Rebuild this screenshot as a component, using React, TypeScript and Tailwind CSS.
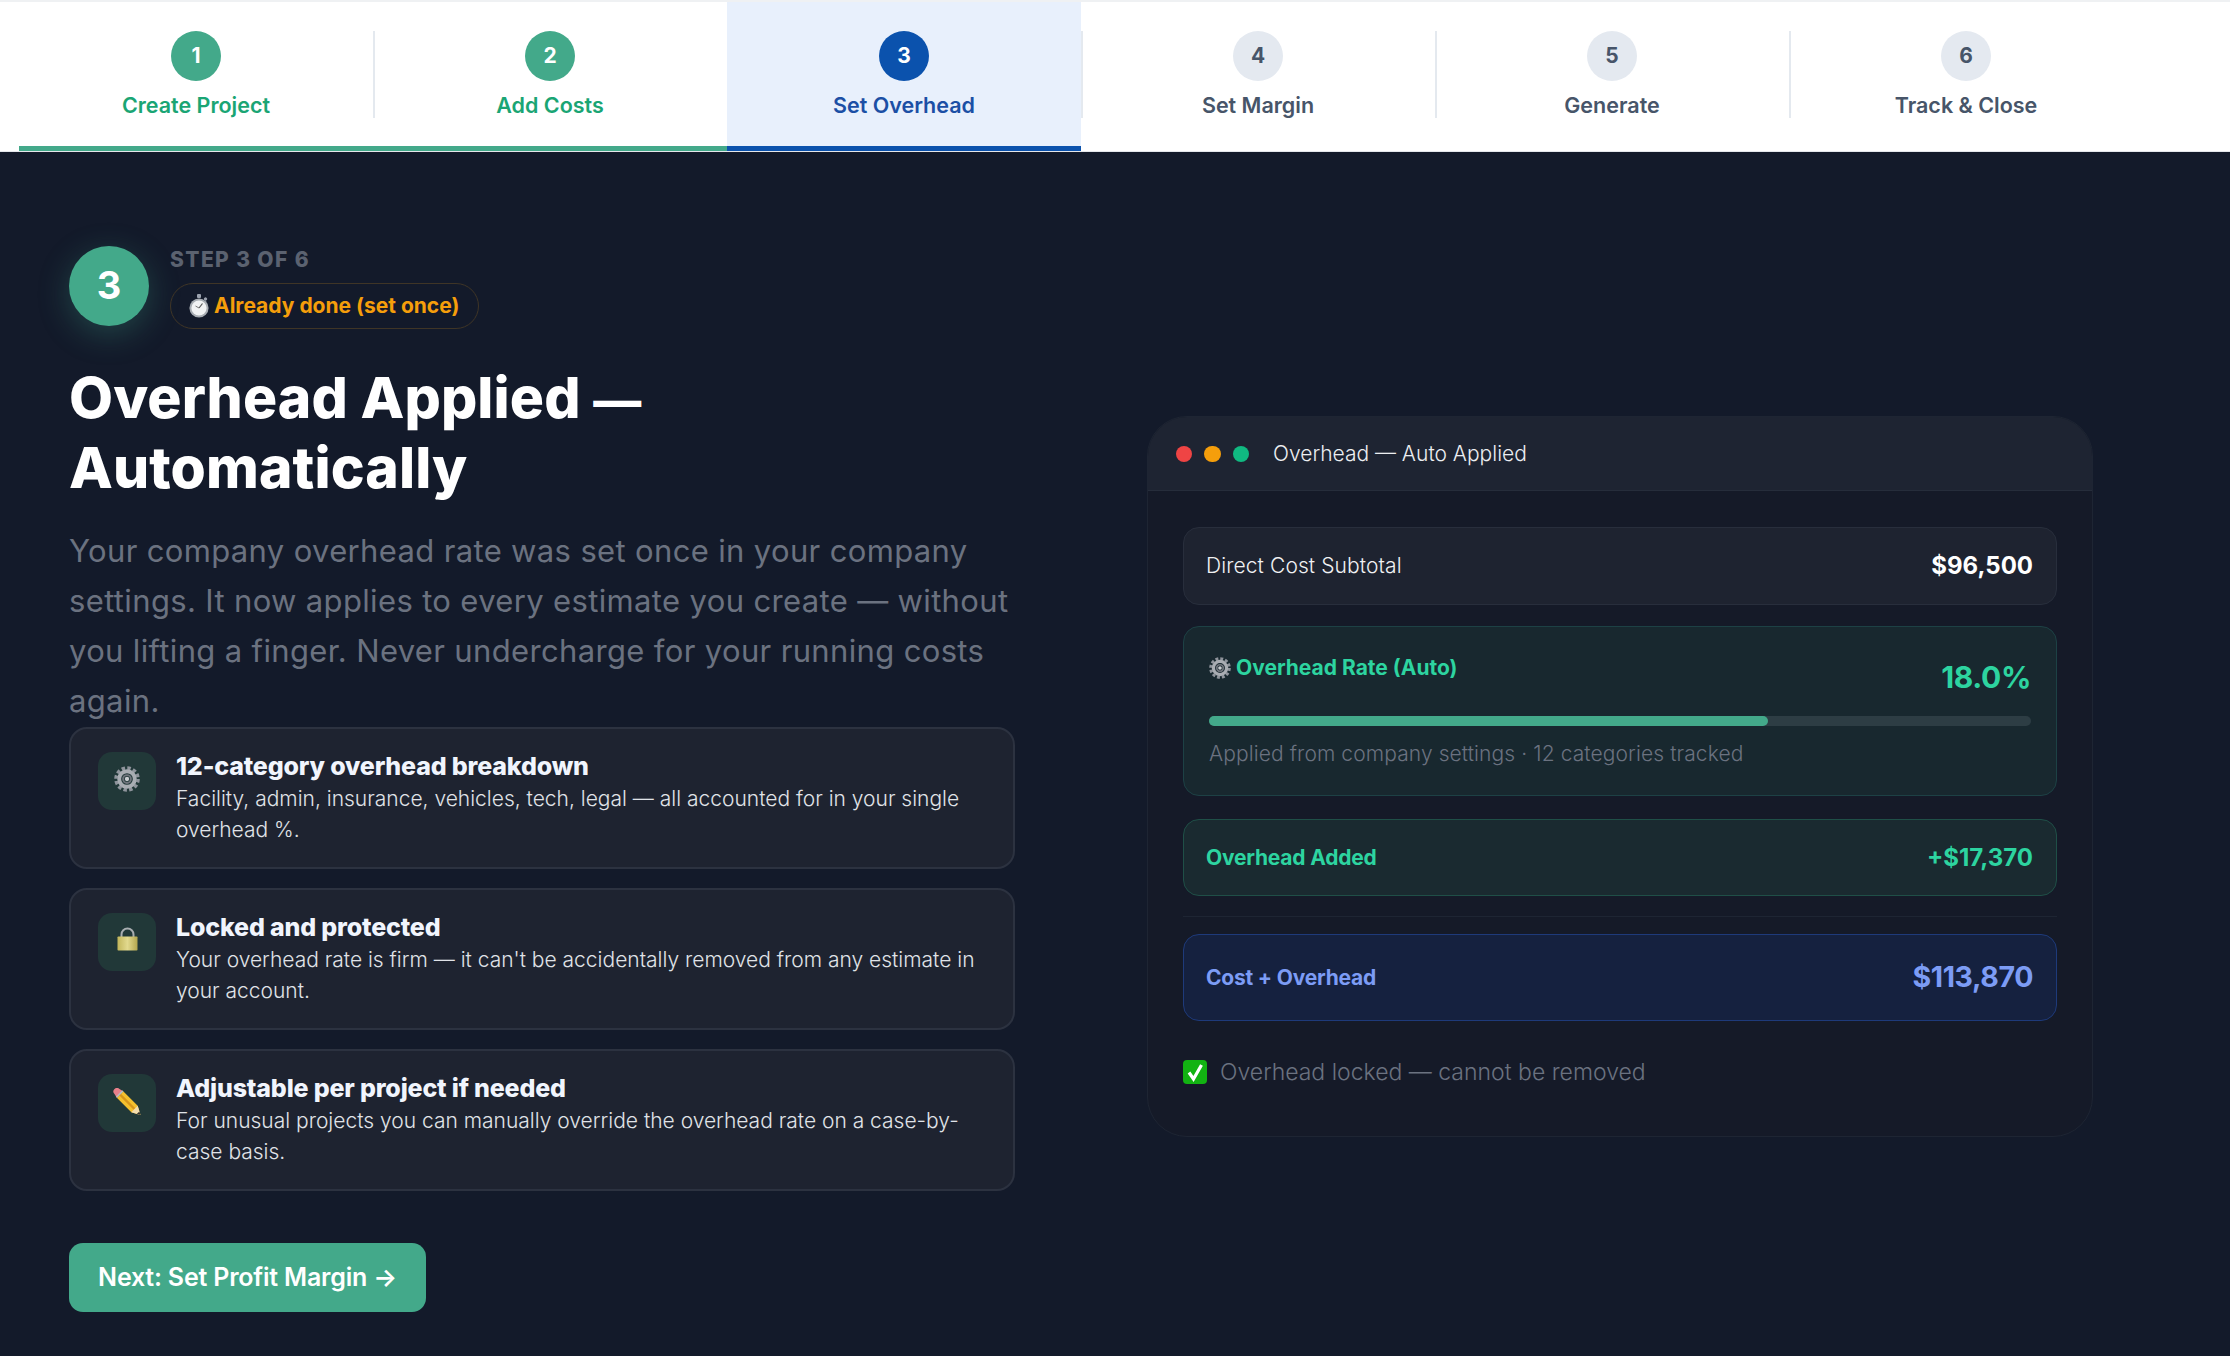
import { ReactNode } from 'react';

const tabs = [
  { n: 1, label: 'Create Project', state: 'done' },
  { n: 2, label: 'Add Costs', state: 'done' },
  { n: 3, label: 'Set Overhead', state: 'active' },
  { n: 4, label: 'Set Margin', state: 'todo' },
  { n: 5, label: 'Generate', state: 'todo' },
  { n: 6, label: 'Track & Close', state: 'todo' },
];

function GearIcon({ size }: { size: number }) {
  return (
    <svg width={size} height={size} viewBox="0 0 24 24" className="shrink-0">
      <circle cx="12" cy="12" r="10.2" fill="none" stroke="#8f949c" strokeWidth="3.2" strokeDasharray="3.2 2.14" />
      <circle cx="12" cy="12" r="7.2" fill="none" stroke="#a9adb3" strokeWidth="3.6" />
      <circle cx="12" cy="12" r="3.6" fill="none" stroke="#6f747c" strokeWidth="1.8" />
      <circle cx="12" cy="12" r="2" fill="#c9ccd0" />
    </svg>
  );
}

function LockIcon() {
  return (
    <svg width="21" height="24" viewBox="0 0 21 24">
      <defs>
        <linearGradient id="lockBody" x1="0" x2="1" y1="0" y2="0">
          <stop offset="0" stopColor="#c2b65a" />
          <stop offset="0.5" stopColor="#e2d98e" />
          <stop offset="1" stopColor="#b3a64e" />
        </linearGradient>
      </defs>
      <path d="M4.5 11V7.5a6 6 0 0 1 12 0V11" fill="none" stroke="#a8adb0" strokeWidth="2" />
      <rect x="0.5" y="9.5" width="20" height="14" rx="0.8" fill="url(#lockBody)" />
    </svg>
  );
}

function PencilIcon() {
  return (
    <svg width="28" height="28" viewBox="0 0 28 28">
      <path d="M10.2 3.3 L24.7 17.8 L27.5 27 L18.3 24.2 L3.8 9.7 Z" fill="#f4c02e" />
      <path d="M7 6.5 L21.5 21" stroke="#d8961c" strokeWidth="2.4" />
      <path d="M24.7 17.8 L27.5 27 L18.3 24.2 Z" fill="#f3dcae" />
      <path d="M26.4 23.4 L27.5 27 L23.8 25.9 Z" fill="#33302a" />
      <path d="M6.5 1 L10.2 3.3 L3.8 9.7 L1.5 6 a3.5 3.5 0 0 1 5 -5 Z" fill="#e8808a" />
      <path d="M3.4 9.3 L9.8 2.9" stroke="#b9bcc0" strokeWidth="1.6" />
    </svg>
  );
}

function StopwatchIcon() {
  return (
    <svg width="20" height="26" viewBox="0 0 20 26" className="shrink-0">
      <rect x="8" y="1" width="4" height="4" rx="1" fill="#9ca3af" />
      <rect x="15" y="4.5" width="3" height="3" rx="1" fill="#9ca3af" transform="rotate(45 16.5 6)" />
      <circle cx="10" cy="15" r="9.6" fill="#a8adb3" />
      <circle cx="10" cy="15" r="7.6" fill="#f1f2f3" />
      <path d="M10 15 L13.5 10.5" stroke="#555" strokeWidth="1.2" />
      <path d="M10 15 L6.5 13" stroke="#777" strokeWidth="1" />
    </svg>
  );
}

function CheckIcon() {
  return (
    <svg width="24" height="24" viewBox="0 0 24 24" className="shrink-0">
      <rect width="24" height="24" rx="4" fill="#12b312" />
      <path d="M6 12.5 L10.5 19 L18.5 5" fill="none" stroke="#fff" strokeWidth="3.2" />
    </svg>
  );
}

function Feature({ icon, title, children }: { icon: ReactNode; title: string; children: ReactNode }) {
  return (
    <div className="flex gap-[20px] rounded-[18px] border-2 border-[#2c3240] bg-[#1e2330] pt-[21px] pb-[22px] pl-[27px] pr-[20px]">
      <div className="mt-[2px] flex h-[58px] w-[58px] shrink-0 justify-center rounded-[14px] bg-[#213838] pt-[14px]">
        {icon}
      </div>
      <div>
        <div className="text-[25px] leading-[32px] font-extrabold tracking-[-0.17px] text-[#f1f5fd]">{title}</div>
        <p className="mt-[2px] text-[21px] leading-[30.5px] font-light text-[#e0e3e8]">{children}</p>
      </div>
    </div>
  );
}

export default function App() {
  return (
    <div className="min-h-[1356px] bg-[#131a2a] [font-family:Inter,sans-serif]">
      <nav className="flex h-[152px] border-t-2 border-b border-t-[#eff1f3] border-b-[#e5e7eb] bg-white pl-[19px]">
        {tabs.map((t) => (
          <div
            key={t.n}
            className={`h-[149px] w-[354px] border-b-[5px] pt-[29px] ${
              t.state === 'done'
                ? 'border-[#43a98a]'
                : t.state === 'active'
                  ? 'border-[#0b52ad] bg-[#e8f0fc]'
                  : 'border-transparent'
            }`}
          >
            <div
              className={`flex h-[87px] w-[356px] flex-col items-center border-r-2 ${
                t.n < 6 ? 'border-[#e4e9ef]' : 'border-transparent'
              }`}
            >
              <div
                className={`flex h-[50px] w-[50px] items-center justify-center rounded-full text-[21px] font-bold ${
                  t.state === 'done'
                    ? 'bg-[#43a98a] text-white'
                    : t.state === 'active'
                      ? 'bg-[#0b52ad] text-white'
                      : 'bg-[#e4e9f0] text-[#475569]'
                }`}
              >
                {t.n}
              </div>
              <div
                className={`mt-[11px] text-[21.5px] leading-[26px] font-semibold ${
                  t.state === 'done' ? 'text-[#1aa574]' : t.state === 'active' ? 'text-[#1b4fa5]' : 'text-[#475569]'
                }`}
              >
                {t.label}
              </div>
            </div>
          </div>
        ))}
      </nav>

      <main className="grid w-[2024px] grid-cols-[946px_946px] items-center gap-[132px] pt-[94px] pl-[69px]">
        <section>
          <div className="flex items-start gap-[21px]">
            <div className="flex h-[80px] w-[80px] items-center justify-center rounded-full bg-[#43a98a] pb-[2px] text-[38px] font-bold text-white shadow-[0_8px_32px_rgba(67,169,138,0.3)]">
              3
            </div>
            <div>
              <div className="text-[21px] leading-[27px] font-extrabold tracking-[1.4px] text-[#5b6270]">STEP 3 OF 6</div>
              <div className="mt-[10px] flex h-[46px] w-[309px] items-center gap-[5px] rounded-full border border-[#3f3526] pl-[18px] text-[21px] font-bold text-[#f59e0b]">
                <StopwatchIcon />
                Already done (set once)
              </div>
            </div>
          </div>

          <h1 className="mt-[34px] text-[57px] leading-[70px] font-extrabold tracking-[0.1px] text-white">
            Overhead Applied <span className="text-[48px] leading-none">—</span>
            <br />
            Automatically
          </h1>

          <p className="mt-[23px] w-[946px] text-[31px] leading-[50px] font-normal tracking-[0.35px] text-[#6b7280]">
            Your company overhead rate was set once in your company settings. It now applies to every estimate you
            create — without you lifting a finger. Never undercharge for your running costs again.
          </p>

          <div className="mt-px flex flex-col gap-[19px]">
            <Feature icon={<GearIcon size={26} />} title="12-category overhead breakdown">
              Facility, admin, insurance, vehicles, tech, legal — all accounted for in your single overhead %.
            </Feature>
            <Feature icon={<LockIcon />} title="Locked and protected">
              Your overhead rate is firm — it can't be accidentally removed from any estimate in your account.
            </Feature>
            <Feature icon={<PencilIcon />} title="Adjustable per project if needed">
              For unusual projects you can manually override the overhead rate on a case-by-case basis.
            </Feature>
          </div>

          <button
            type="button"
            className="mt-[52px] h-[69px] w-[357px] rounded-[14px] bg-[#43a98a] text-[25px] font-semibold tracking-[-0.2px] text-white"
          >
            Next: Set Profit Margin →
          </button>
        </section>

        <section className="mb-[5px] h-[721px] overflow-hidden rounded-[40px] border border-[#1e2533] bg-[#151a28]">
          <div className="flex h-[74px] items-center border-b border-[#262d3b] bg-[#1e2432] pl-[28px]">
            <span className="h-[16px] w-[16px] rounded-full bg-[#ef4444]" />
            <span className="ml-[12px] h-[16px] w-[17px] rounded-full bg-[#f59e0b]" />
            <span className="ml-[12px] h-[16px] w-[16px] rounded-full bg-[#10b981]" />
            <span className="ml-[24px] text-[21px] font-light text-[#eceef1]">Overhead — Auto Applied</span>
          </div>

          <div className="px-[35px] pt-[36px]">
            <div className="flex h-[78px] items-center justify-between rounded-[16px] border border-[#282e3c] bg-[#1e2330] pr-[23px] pl-[22px]">
              <span className="text-[21px] font-light tracking-[0.1px] text-[#f0f1f3]">Direct Cost Subtotal</span>
              <span className="text-[24px] font-bold text-white">$96,500</span>
            </div>

            <div className="mt-[21px] h-[170px] rounded-[16px] border border-[#1d4145] bg-[#18282f] px-[25px] pt-[25px]">
              <div className="flex items-start justify-between">
                <span className="flex items-center gap-[5px] text-[21px] font-bold text-[#2dd4a0]">
                  <GearIcon size={22} />
                  Overhead Rate (Auto)
                </span>
                <span className="mt-[6px] text-[30px] leading-[38px] font-bold tracking-[-0.4px] text-[#2dd4a0]">18.0%</span>
              </div>
              <div className="mt-[20px] h-[10px] rounded-full bg-[#2d3d44]">
                <div className="h-full w-[68%] rounded-full bg-[#43a98a]" />
              </div>
              <div className="mt-[12px] text-[21px] font-light tracking-[0.1px] text-[#6b7280]">
                Applied from company settings · 12 categories tracked
              </div>
            </div>

            <div className="mt-[23px] flex h-[77px] items-center justify-between rounded-[16px] border border-[#1f4f47] bg-[#1a2a30] pr-[23px] pl-[22px]">
              <span className="text-[21px] font-bold tracking-[-0.2px] text-[#2dd4a0]">Overhead Added</span>
              <span className="text-[24px] font-bold text-[#2dd4a0]">+$17,370</span>
            </div>

            <div className="mt-[20px] h-px bg-[#1e2533]" />

            <div className="mt-[17px] flex h-[87px] items-center justify-between rounded-[16px] border border-[#1e3a7a] bg-[#15213f] pr-[23px] pl-[22px]">
              <span className="text-[21px] font-bold tracking-[-0.2px] text-[#7c9cf5]">Cost + Overhead</span>
              <span className="text-[28.5px] font-bold tracking-[-0.4px] text-[#7c9cf5]">$113,870</span>
            </div>

            <div className="mt-[34px] flex items-center gap-[13px]">
              <CheckIcon />
              <span className="text-[23px] font-light text-[#6b7280]">Overhead locked — cannot be removed</span>
            </div>
          </div>
        </section>
      </main>
    </div>
  );
}
